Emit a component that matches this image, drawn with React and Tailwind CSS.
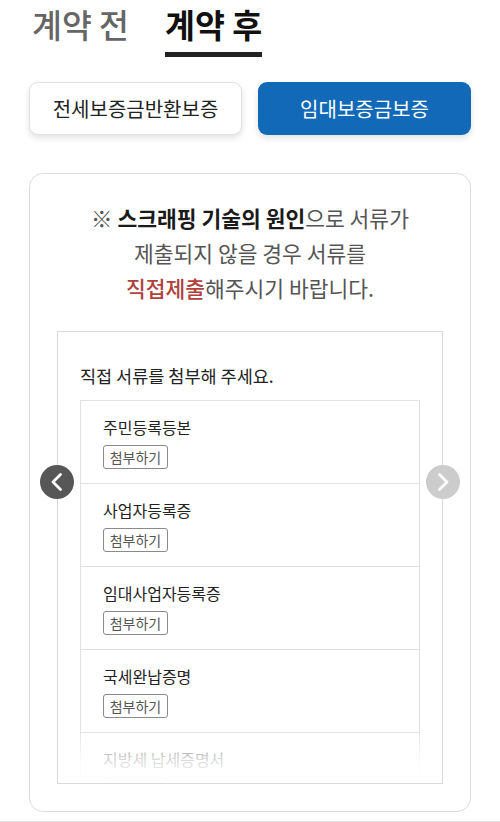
import React from "react";

const docs = ["주민등록등본", "사업자등록증", "임대사업자등록증", "국세완납증명", "지방세 납세증명서"];

function Chevron({ dir }) {
  return (
    <svg width="20" height="20" viewBox="0 0 20 20" fill="none">
      <path
        d={dir === "left" ? "M13.5 2.5 L6 10 L13.5 17.5" : "M6.5 2.5 L14 10 L6.5 17.5"}
        stroke="white"
        strokeWidth="2.8"
        strokeLinecap="round"
        strokeLinejoin="round"
      />
    </svg>
  );
}

export default function App() {
  return (
    <div className="w-[500px] h-[822px] bg-white overflow-hidden relative font-['Noto_Sans_CJK_KR','Noto_Sans',sans-serif]">
      {/* Tabs */}
      <div className="flex gap-[36px] pl-[32px] pt-[6px]">
        <div className="flex flex-col items-stretch">
          <div className="text-[32.5px] leading-[36px] font-medium text-[#666]">계약 전</div>
        </div>
        <div className="flex flex-col items-stretch">
          <div className="text-[32.5px] leading-[36px] font-bold text-[#111]">계약 후</div>
          <div className="mt-[10px] h-[5px] bg-[#222]" />
        </div>
      </div>

      {/* Buttons */}
      <div className="flex gap-[16px] px-[29px] mt-[25px]">
        <div className="w-[213px] h-[53px] rounded-[9px] border border-[#e2e2e2] bg-white shadow-[0_3px_6px_rgba(0,0,0,0.12)] flex items-center justify-center text-[20px] text-[#222]">
          전세보증금반환보증
        </div>
        <div className="w-[213px] h-[53px] rounded-[9px] bg-[#1169b7] shadow-[0_3px_6px_rgba(0,0,0,0.12)] flex items-center justify-center text-[20px] text-white">
          임대보증금보증
        </div>
      </div>

      {/* Card */}
      <div className="mx-[29px] mt-[38px] h-[639px] rounded-[14px] border border-[#dcdcdc] bg-white px-[27px] pt-[26px]">
        <div className="text-center text-[21.5px] leading-[35px] text-[#555]">
          <div>
            ※ <span className="font-bold text-[#1a1a1a]">스크래핑 기술의 원인</span>으로 서류가
          </div>
          <div>제출되지 않을 경우 서류를</div>
          <div>
            <span className="font-medium text-[#b0413c]">직접제출</span>해주시기 바랍니다.
          </div>
        </div>

        <div className="relative mt-[26px]">
          <div className="relative h-[453px] border border-[#dadada] overflow-hidden px-[22px] pt-[32px]">
            <div className="text-[17.5px] leading-[24px] text-[#222]">직접 서류를 첨부해 주세요.</div>
            <div className="mt-[12px] border border-[#e2e2e2]">
              {docs.map((d, i) => (
                <div
                  key={d}
                  className={`px-[22px] pt-[16px] pb-[14px] ${i > 0 ? "border-t border-[#e2e2e2]" : ""}`}
                >
                  <div className="text-[16px] leading-[20px] text-[#222]">{d}</div>
                  <div className="mt-[8px] w-[65px] h-[24px] rounded-[3px] border border-[#8a8a8a] flex items-center justify-center text-[14px] text-[#555]">
                    첨부하기
                  </div>
                </div>
              ))}
            </div>
            <div className="absolute left-0 right-0 bottom-0 h-[52px] bg-gradient-to-b from-white/0 via-white/80 to-white" />
          </div>

          <div className="absolute left-[-17px] top-[134px] w-[34px] h-[34px] rounded-full bg-[#575757] flex items-center justify-center">
            <Chevron dir="left" />
          </div>
          <div className="absolute right-[-17px] top-[134px] w-[34px] h-[34px] rounded-full bg-[#cccccc] flex items-center justify-center">
            <Chevron dir="right" />
          </div>
        </div>
      </div>

      <div className="absolute left-0 right-0 top-[821px] h-px bg-[#e6e6e6]" />
    </div>
  );
}
